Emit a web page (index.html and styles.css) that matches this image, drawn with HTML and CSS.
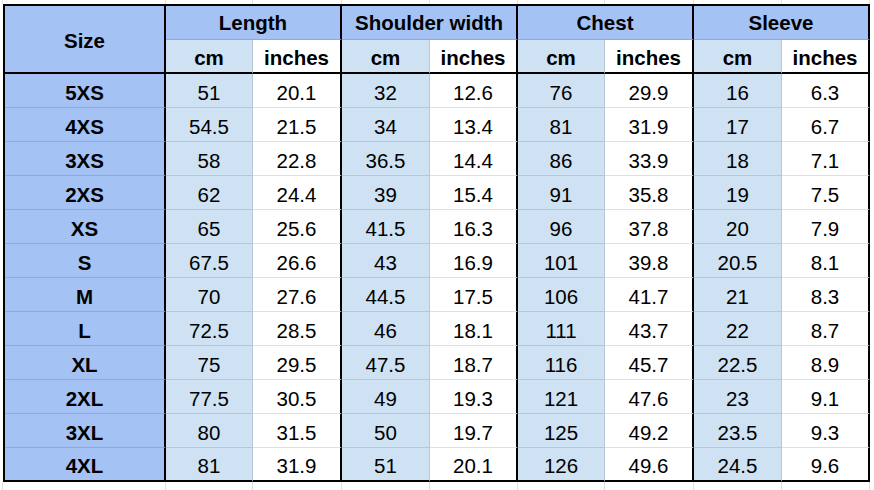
FILE: index.html
```html
<!DOCTYPE html>
<html lang="en">
<head>
<meta charset="utf-8">
<title>Size chart</title>
<link rel="stylesheet" href="styles.css">
</head>
<body>
<div class="sheet">
  <div class="strip strip-top">
    <span></span><span></span><span></span><span></span><span></span><span></span><span></span><span></span><span></span><span></span>
  </div>
  <div class="chart">
    <div class="cell head size-head end">Size</div>
    <div class="cell head group end">Length</div>
    <div class="cell head group end">Shoulder width</div>
    <div class="cell head group end">Chest</div>
    <div class="cell head group end">Sleeve</div>

    <div class="cell head sub cm">cm</div><div class="cell head sub end">inches</div>
    <div class="cell head sub cm">cm</div><div class="cell head sub end">inches</div>
    <div class="cell head sub cm">cm</div><div class="cell head sub end">inches</div>
    <div class="cell head sub cm">cm</div><div class="cell head sub end">inches</div>

    <div class="cell size end">5XS</div>
    <div class="cell cm">51</div><div class="cell end">20.1</div>
    <div class="cell cm">32</div><div class="cell end">12.6</div>
    <div class="cell cm">76</div><div class="cell end">29.9</div>
    <div class="cell cm">16</div><div class="cell end">6.3</div>

    <div class="cell size end">4XS</div>
    <div class="cell cm">54.5</div><div class="cell end">21.5</div>
    <div class="cell cm">34</div><div class="cell end">13.4</div>
    <div class="cell cm">81</div><div class="cell end">31.9</div>
    <div class="cell cm">17</div><div class="cell end">6.7</div>

    <div class="cell size end">3XS</div>
    <div class="cell cm">58</div><div class="cell end">22.8</div>
    <div class="cell cm">36.5</div><div class="cell end">14.4</div>
    <div class="cell cm">86</div><div class="cell end">33.9</div>
    <div class="cell cm">18</div><div class="cell end">7.1</div>

    <div class="cell size end">2XS</div>
    <div class="cell cm">62</div><div class="cell end">24.4</div>
    <div class="cell cm">39</div><div class="cell end">15.4</div>
    <div class="cell cm">91</div><div class="cell end">35.8</div>
    <div class="cell cm">19</div><div class="cell end">7.5</div>

    <div class="cell size end">XS</div>
    <div class="cell cm">65</div><div class="cell end">25.6</div>
    <div class="cell cm">41.5</div><div class="cell end">16.3</div>
    <div class="cell cm">96</div><div class="cell end">37.8</div>
    <div class="cell cm">20</div><div class="cell end">7.9</div>

    <div class="cell size end">S</div>
    <div class="cell cm">67.5</div><div class="cell end">26.6</div>
    <div class="cell cm">43</div><div class="cell end">16.9</div>
    <div class="cell cm">101</div><div class="cell end">39.8</div>
    <div class="cell cm">20.5</div><div class="cell end">8.1</div>

    <div class="cell size end">M</div>
    <div class="cell cm">70</div><div class="cell end">27.6</div>
    <div class="cell cm">44.5</div><div class="cell end">17.5</div>
    <div class="cell cm">106</div><div class="cell end">41.7</div>
    <div class="cell cm">21</div><div class="cell end">8.3</div>

    <div class="cell size end">L</div>
    <div class="cell cm">72.5</div><div class="cell end">28.5</div>
    <div class="cell cm">46</div><div class="cell end">18.1</div>
    <div class="cell cm">111</div><div class="cell end">43.7</div>
    <div class="cell cm">22</div><div class="cell end">8.7</div>

    <div class="cell size end">XL</div>
    <div class="cell cm">75</div><div class="cell end">29.5</div>
    <div class="cell cm">47.5</div><div class="cell end">18.7</div>
    <div class="cell cm">116</div><div class="cell end">45.7</div>
    <div class="cell cm">22.5</div><div class="cell end">8.9</div>

    <div class="cell size end">2XL</div>
    <div class="cell cm">77.5</div><div class="cell end">30.5</div>
    <div class="cell cm">49</div><div class="cell end">19.3</div>
    <div class="cell cm">121</div><div class="cell end">47.6</div>
    <div class="cell cm">23</div><div class="cell end">9.1</div>

    <div class="cell size end">3XL</div>
    <div class="cell cm">80</div><div class="cell end">31.5</div>
    <div class="cell cm">50</div><div class="cell end">19.7</div>
    <div class="cell cm">125</div><div class="cell end">49.2</div>
    <div class="cell cm">23.5</div><div class="cell end">9.3</div>

    <div class="cell size end last">4XL</div>
    <div class="cell cm last">81</div><div class="cell end last">31.9</div>
    <div class="cell cm last">51</div><div class="cell end last">20.1</div>
    <div class="cell cm last">126</div><div class="cell end last">49.6</div>
    <div class="cell cm last">24.5</div><div class="cell end last">9.6</div>
  </div>
  <div class="strip strip-bottom">
    <span></span><span></span><span></span><span></span><span></span><span></span><span></span><span></span><span></span><span></span>
  </div>
</div>
</body>
</html>
```

FILE: styles.css
```css
html, body {
  margin: 0;
  padding: 0;
  background: #ffffff;
}

body {
  font-family: "Liberation Sans", Arial, sans-serif;
  color: #000000;
  width: 874px;
  height: 490px;
  overflow: hidden;
}

.sheet {
  display: flex;
  flex-direction: column;
}

.strip {
  display: grid;
  grid-template-columns: 3px 163px 87px 89px 88px 88px 87px 89px 88px 88px;
}

.strip span {
  box-sizing: border-box;
  border-right: 1px solid #e2e2e2;
}

.strip-top {
  height: 4px;
}

.strip-bottom {
  height: 10px;
}

.chart {
  display: grid;
  grid-template-columns: 161px 87px 89px 88px 88px 87px 89px 88px 88px;
  grid-template-rows: repeat(14, 34px);
  width: max-content;
  margin-left: 3px;
  border-left: 2px solid #000000;
  border-top: 2px solid #000000;
}

.cell {
  box-sizing: border-box;
  display: flex;
  align-items: center;
  justify-content: center;
  font-size: 20.5px;
  line-height: normal;
  white-space: nowrap;
  background: #ffffff;
  border-right: 1px solid rgba(0, 0, 0, 0.12);
  border-bottom: 1px solid rgba(0, 0, 0, 0.12);
  padding-top: 4px;
}

.cell.cm {
  background: #cfe2f3;
}

.cell.end {
  border-right: 2px solid #000000;
}

.cell.last {
  border-bottom: 2px solid #000000;
}

.head {
  font-weight: bold;
}

.size-head {
  grid-row: span 2;
  background: #a4c2f4;
  border-bottom: 2px solid #000000;
  padding-top: 3px;
}

.group {
  grid-column: span 2;
  background: #a4c2f4;
  padding-top: 1px;
}

.sub {
  border-bottom: 2px solid #000000;
  padding-top: 4px;
}

.size {
  background: #a4c2f4;
  font-weight: bold;
}
```
